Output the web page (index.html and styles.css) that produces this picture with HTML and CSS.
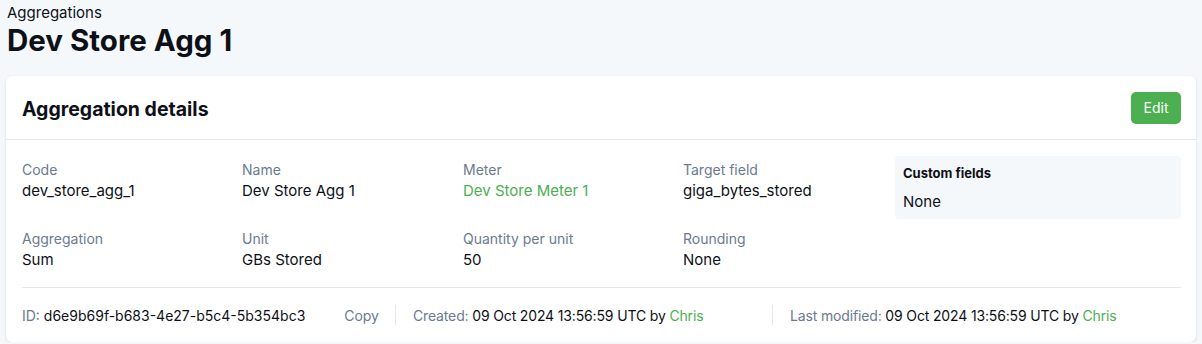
FILE: index.html
```html
<!DOCTYPE html>
<html lang="en">
<head>
    <meta charset="UTF-8">
    <title>Dev Store Agg 1</title>
    <link rel="stylesheet" href="styles.css">
</head>
<body>
    <div class="page-header">
        <div class="breadcrumb">Aggregations</div>
        <h1>Dev Store Agg 1</h1>
    </div>

    <div class="card">
        <div class="card-header">
            <h2>Aggregation details</h2>
            <button class="edit-button">Edit</button>
        </div>

        <div class="card-body">
            <div class="details">
                <div class="field">
                    <div class="label">Code</div>
                    <div class="value">dev_store_agg_1</div>
                </div>
                <div class="field">
                    <div class="label">Name</div>
                    <div class="value">Dev Store Agg 1</div>
                </div>
                <div class="field">
                    <div class="label">Meter</div>
                    <div class="value"><a href="#">Dev Store Meter 1</a></div>
                </div>
                <div class="field">
                    <div class="label">Target field</div>
                    <div class="value">giga_bytes_stored</div>
                </div>
                <div class="custom-fields">
                    <h4>Custom fields</h4>
                    <div class="value">None</div>
                </div>
                <div class="field">
                    <div class="label">Aggregation</div>
                    <div class="value">Sum</div>
                </div>
                <div class="field">
                    <div class="label">Unit</div>
                    <div class="value">GBs Stored</div>
                </div>
                <div class="field">
                    <div class="label">Quantity per unit</div>
                    <div class="value">50</div>
                </div>
                <div class="field">
                    <div class="label">Rounding</div>
                    <div class="value">None</div>
                </div>
            </div>

            <!-- Footer with id and audit info -->
            <div class="card-footer">
                <div class="footer-item id-item">
                    <span><span class="muted">ID:</span> d6e9b69f-b683-4e27-b5c4-5b354bc3</span>
                    <span class="muted">Copy</span>
                </div>
                <div class="footer-item created">
                    <span class="muted">Created:</span> 09 Oct 2024 13:56:59 UTC by <a href="#">Chris</a>
                </div>
                <div class="footer-item modified">
                    <span class="muted">Last modified:</span> 09 Oct 2024 13:56:59 UTC by <a href="#">Chris</a>
                </div>
            </div>
        </div>
    </div>
</body>
</html>
```

FILE: styles.css
```css
body {
    margin: 0;
    padding: 0 6px;
    background: #f5f8fb;
    font-family: Inter, "Noto Sans", sans-serif;
    color: #0d1117;
}

.page-header {
    padding: 3px 1px 0;
}

.breadcrumb {
    font-size: 15px;
    line-height: 20px;
}

h1 {
    margin: 0;
    font-size: 29.5px;
    line-height: 34px;
    font-weight: 700;
}

.card {
    margin-top: 19px;
    background: white;
    border-radius: 6px;
    box-shadow: 0 1px 3px rgba(0, 0, 0, 0.12);
}

.card-header {
    display: flex;
    justify-content: space-between;
    align-items: center;
    height: 64px;
    padding: 3px 15px 0 16px;
    box-sizing: border-box;
    border-bottom: 1px solid #e3e8ef;
}

.card-header h2 {
    margin: 0;
    font-size: 19.5px;
    font-weight: 700;
}

.edit-button {
    width: 50px;
    height: 32px;
    margin-top: -3px;
    border: none;
    border-radius: 5px;
    background: #4caf50;
    color: white;
    font-family: inherit;
    font-size: 14px;
    cursor: pointer;
}

.card-body {
    padding: 16px 15px 0 16px;
}

.details {
    display: grid;
    grid-template-columns: 220px 221px 220px 212px 1fr;
    row-gap: 6px;
    padding-bottom: 16px;
    border-bottom: 1px solid #e3e8ef;
}

.field {
    padding-top: 4px;
}

.label {
    font-size: 14px;
    line-height: 20px;
    color: #6b7a90;
}

.value {
    font-size: 15px;
    line-height: 22px;
}

.value a, .card-footer a {
    color: #4caf50;
    text-decoration: none;
}

.custom-fields {
    background: #f5f8fb;
    border-radius: 4px;
    padding: 8px 8px 6px;
}

.custom-fields h4 {
    margin: 0 0 9px;
    font-size: 13px;
    line-height: 18px;
    font-weight: 700;
}

.card-footer {
    display: flex;
    align-items: center;
    height: 54px;
    font-size: 14px;
}

.muted {
    color: #6b7a90;
}

.footer-item {
    display: flex;
    align-items: center;
    height: 20px;
    box-sizing: border-box;
    white-space: pre;
}

.id-item {
    width: 374px;
    justify-content: space-between;
    padding-right: 16px;
    border-right: 1px solid #e3e8ef;
}

.created {
    width: 377px;
    padding-left: 17px;
    border-right: 1px solid #e3e8ef;
    letter-spacing: -0.15px;
}

.modified {
    padding-left: 17px;
    letter-spacing: -0.15px;
}
```
